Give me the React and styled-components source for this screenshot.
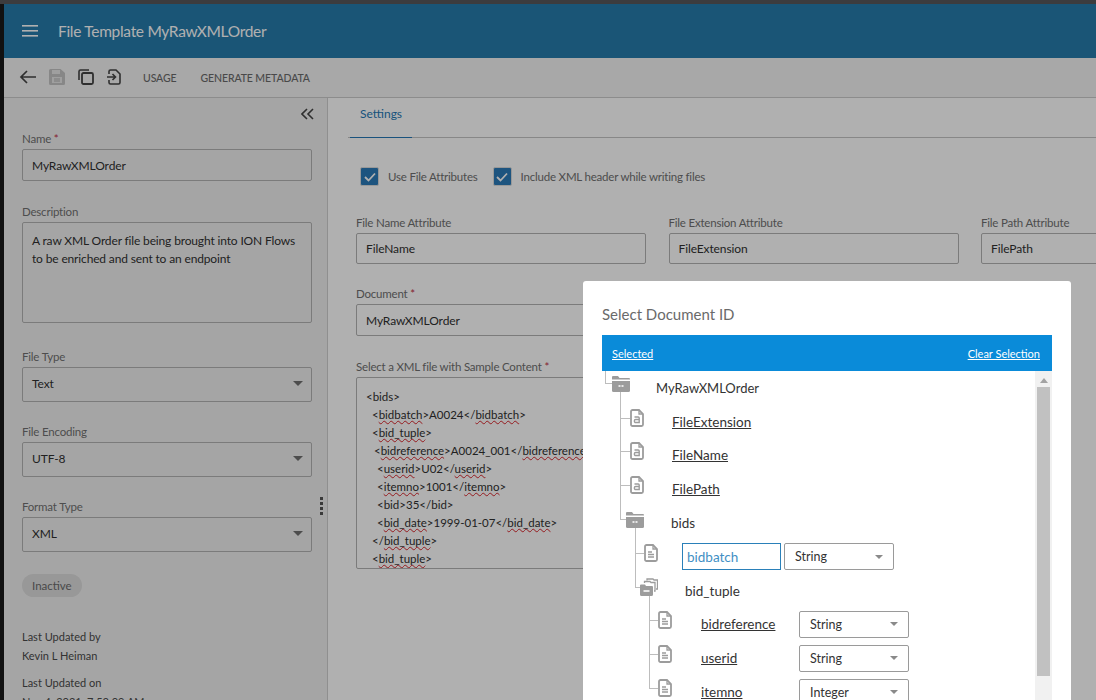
import React from "react";
import styled, { createGlobalStyle } from "styled-components";

const GlobalStyle = createGlobalStyle`
  html, body { margin: 0; padding: 0; height: 700px; overflow: hidden; background: #111; }
  body { font-family: "Lato", "Open Sans", sans-serif; }
  #root { height: 700px; }
  * { box-sizing: border-box; }
`;

const xmlLines = [
  [0, "<bids>"],
  [6, "<~bidbatch~>A0024</~bidbatch~>"],
  [6, "<~bid_tuple~>"],
  [8, "<~bidreference~>A0024_001</~bidreference~>"],
  [11, "<~userid~>U02</~userid~>"],
  [11, "<~itemno~>1001</~itemno~>"],
  [11, "<bid>35</bid>"],
  [11, "<~bid_date~>1999-01-07</~bid_date~>"],
  [6, "</~bid_tuple~>"],
  [6, "<~bid_tuple~>"],
];

const leftSelects = [
  { label: "File Type", value: "Text" },
  { label: "File Encoding", value: "UTF-8" },
  { label: "Format Type", value: "XML" },
];

const treeRows = [
  { level: 0, icon: "folder", name: "MyRawXMLOrder", gap: 26, root: true },
  { level: 1, icon: "attr", name: "FileExtension", gap: 28, link: true },
  { level: 1, icon: "attr", name: "FileName", gap: 28, link: true },
  { level: 1, icon: "attr", name: "FilePath", gap: 28, link: true },
  { level: 1, icon: "folder", name: "bids", gap: 27 },
  { level: 2, icon: "doc", name: "bidbatch", gap: 24, editing: true, type: "String" },
  { level: 2, icon: "multi", name: "bid_tuple", gap: 27 },
  { level: 3, icon: "doc", name: "bidreference", gap: 29, link: true, type: "String" },
  { level: 3, icon: "doc", name: "userid", gap: 29, link: true, type: "String" },
  { level: 3, icon: "doc", name: "itemno", gap: 29, link: true, type: "Integer" },
];

function Tick() {
  return (
    <svg width="12" height="10" viewBox="0 0 12 10" fill="none" stroke="#fff" strokeWidth="1.800">
      <path d="m1 5 3.500 3.500L11 1.500" />
    </svg>
  );
}

export default function App() {
  return (
    <>
      <GlobalStyle />
      <TopEdge />
      <Shell>
        <Header>
          <svg width="16" height="12" viewBox="0 0 16 12" fill="#fff">
            <rect y="0" width="16" height="1.6" />
            <rect y="5" width="16" height="1.6" />
            <rect y="10" width="16" height="1.6" />
          </svg>
          <Title>File Template MyRawXMLOrder</Title>
        </Header>

        <Toolbar>
          <ToolIcon $right={12} viewBox="0 0 18 16" width="18" height="16">
            <path d="M17 8H2M8 2 2 8l6 6" fill="none" stroke="#444" strokeWidth="1.7" />
          </ToolIcon>
          <ToolIcon viewBox="0 0 16 16" width="16" height="16">
            <path d="M1.5 0h10L16 4v10.500a1.500 1.500 0 0 1-1.500 1.500h-13A1.500 1.500 0 0 1 0 14.500v-13A1.500 1.500 0 0 1 1.500 0Z" fill="#c4c4c4" />
            <path d="M3 1h8v4H3zM3 8h10v6H3z" fill="#e6e6e6" />
            <path d="M5 10h6M5 12h6" stroke="#b0b0b0" strokeWidth="1" />
          </ToolIcon>
          <ToolIcon viewBox="0 0 16 16" width="16" height="16">
            <path d="M1 11V2.500A1.500 1.500 0 0 1 2.500 1H11" fill="none" stroke="#444" strokeWidth="1.600" />
            <rect x="4" y="4" width="11" height="11" rx="1.500" fill="none" stroke="#444" strokeWidth="1.800" />
          </ToolIcon>
          <ToolIcon viewBox="0 0 14 16" width="14" height="16">
            <path d="M2 5V2.500A1.500 1.500 0 0 1 3.500 1H9l4 4v8.500a1.500 1.500 0 0 1-1.500 1.500h-8A1.500 1.500 0 0 1 2 13.500V11" fill="none" stroke="#444" strokeWidth="1.600" />
            <path d="M0 8h8M5.500 5 8.500 8l-3 3" fill="none" stroke="#444" strokeWidth="1.600" />
          </ToolIcon>
          <ToolText $first>USAGE</ToolText>
          <ToolText>GENERATE METADATA</ToolText>
        </Toolbar>

        <Content>
          <LeftPanel>
            <CollapseRow>
              <svg width="13" height="12" viewBox="0 0 13 12" fill="none" stroke="#444" strokeWidth="1.600">
                <path d="M6 1 1 6l5 5M12 1 7 6l5 5" />
              </svg>
            </CollapseRow>
            <Label>Name <Req>*</Req></Label>
            <Input $h={32}>MyRawXMLOrder</Input>
            <Label $top={24}>Description</Label>
            <TextBox>A raw XML Order file being brought into ION Flows to be enriched and sent to an endpoint</TextBox>
            {leftSelects.map((s, i) => (
              <React.Fragment key={s.label}>
                <Label $top={i === 0 ? 27 : 23}>{s.label}</Label>
                <Select $h={35}>{s.value}<Caret /></Select>
              </React.Fragment>
            ))}
            <Pill>Inactive</Pill>
            <Meta $top={30}>Last Updated by</Meta>
            <Meta>Kevin L Heiman</Meta>
            <Meta $top={8}>Last Updated on</Meta>
            <Meta>Nov 4, 2021, 7:53:09 AM</Meta>
            <Grip><i /><i /><i /><i /></Grip>
          </LeftPanel>

          <RightPanel>
            <TabBar>
              <Tab>Settings</Tab>
            </TabBar>
            <Form>
              <CheckRow>
                <CheckItem>
                  <Check><Tick /></Check>
                  <span>Use File Attributes</span>
                </CheckItem>
                <CheckItem>
                  <Check><Tick /></Check>
                  <span>Include XML header while writing files</span>
                </CheckItem>
              </CheckRow>
              <FieldRow>
                <Field><Label>File Name Attribute</Label><Input $h={31}>FileName</Input></Field>
                <Field><Label>File Extension Attribute</Label><Input $h={31}>FileExtension</Input></Field>
                <Field><Label>File Path Attribute</Label><Input $h={31}>FilePath</Input></Field>
              </FieldRow>
              <Label $top={23}>Document <Req>*</Req></Label>
              <WideInput $h={32}>MyRawXMLOrder</WideInput>
              <Label $top={24}>Select a XML file with Sample Content <Req>*</Req></Label>
              <XmlBox>
                {xmlLines.map(([indent, text], i) => (
                  <XmlLine key={i} $indent={indent}>
                    {text.split("~").map((part, j) =>
                      j % 2 ? <Spell key={j}>{part}</Spell> : part
                    )}
                  </XmlLine>
                ))}
              </XmlBox>
            </Form>
          </RightPanel>
        </Content>

        <Backdrop />

        <Modal>
          <ModalTitle>Select Document ID</ModalTitle>
          <SelectedBar>
            <BarLink>Selected</BarLink>
            <BarLink>Clear Selection</BarLink>
          </SelectedBar>
          <TreeArea>
            <Tree>
              {treeRows.map((row) => (
                <TreeRow key={row.name} $level={row.level}>
                  <IconSlot
                    $gap={row.gap}
                    $root={row.root}
                    $level={row.level}
                    $doc={row.icon === "attr" || row.icon === "doc"}
                  >
                    <TreeIcon kind={row.icon} />
                  </IconSlot>
                  {row.editing ? (
                    <NameInput>{row.name}</NameInput>
                  ) : (
                    <NodeName $link={row.link} $fixed={!!row.type} $root={row.root}>
                      <span>{row.name}</span>
                    </NodeName>
                  )}
                  {row.type && <TypeSelect>{row.type}<SmallCaret /></TypeSelect>}
                </TreeRow>
              ))}
            </Tree>
            <Scrollbar>
              <ScrollUp />
              <ScrollThumb />
            </Scrollbar>
          </TreeArea>
        </Modal>
      </Shell>
    </>
  );
}

function TreeIcon({ kind }) {
  if (kind === "folder") {
    return (
      <svg width="18" height="17" viewBox="0 0 18 17">
        <path d="M0 2a1 1 0 0 1 1-1h5l1.500 2H17a1 1 0 0 1 1 1v.500H0Z" fill="#9c9c9c" />
        <path d="M0 6h18v9.500a1.500 1.500 0 0 1-1.500 1.500h-15A1.500 1.500 0 0 1 0 15.500Z" fill="#9c9c9c" />
        <path d="M6.500 11h2M9.500 11h2" stroke="#fff" strokeWidth="1.500" />
      </svg>
    );
  }
  if (kind === "multi") {
    return (
      <svg width="18" height="18" viewBox="0 0 18 18">
        <path d="M7 2.500V1h6l1 1h3.500v9H16" fill="none" stroke="#9c9c9c" strokeWidth="1.300" />
        <path d="M4.500 5V3.500H10l1 1h4V13h-1" fill="none" stroke="#9c9c9c" strokeWidth="1.300" />
        <path d="M0 7.500a1 1 0 0 1 1-1h4l1 1.500h6a1 1 0 0 1 1 1V16.500A1.500 1.500 0 0 1 11.500 18h-10A1.500 1.500 0 0 1 0 16.500Z" fill="#9c9c9c" />
        <path d="M3.500 13h6" stroke="#fff" strokeWidth="1.500" />
      </svg>
    );
  }
  return (
    <svg width="14" height="18" viewBox="0 0 14 18" fill="none" stroke="#9c9c9c">
      <path d="M2.500 1H9l4 4v10.500a1.500 1.500 0 0 1-1.500 1.500h-9A1.500 1.500 0 0 1 1 15.500v-13A1.500 1.500 0 0 1 2.500 1Z" strokeWidth="1.800" />
      <path d="M9 1v4h4" strokeWidth="1.300" />
      {kind === "attr" ? (
        <path d="M4.500 8h3.700a1 1 0 0 1 1 1v4.500H5.600a1.200 1.200 0 0 1-1.200-1.200v-.6a1.200 1.200 0 0 1 1.200-1.200h3.600" strokeWidth="1.400" />
      ) : (
        <path d="M4 8h4M4 10.500h6M4 13h6" strokeWidth="1.400" />
      )}
    </svg>
  );
}

const TopEdge = styled.div`
  height: 4px;
  background: #3c3c3e;
`;

const Shell = styled.div`
  position: relative;
  height: 696px;
  margin-left: 4px;
  display: flex;
  flex-direction: column;
  overflow: hidden;
  background: #fff;
`;

const Header = styled.header`
  flex: none;
  height: 54px;
  padding-left: 18px;
  display: flex;
  align-items: center;
  gap: 20px;
  background: #267bac;
`;

const Title = styled.div`
  color: #fff;
  font-size: 15.500px;
  letter-spacing: -0.3px;
`;

const Toolbar = styled.div`
  flex: none;
  height: 40px;
  padding-left: 15px;
  display: flex;
  align-items: center;
  background: #f3f3f3;
  border-bottom: 1px solid #cbcbcb;
`;

const ToolIcon = styled.svg`
  flex: none;
  margin-right: ${(p) => p.$right || 13}px;
  margin-bottom: 2px;
`;

const ToolText = styled.div`
  margin-left: ${(p) => (p.$first ? "9px" : "24px")};
  color: #6b6b6b;
  font-size: 10.500px;
  font-weight: 500;
  letter-spacing: -0.1px;
`;

const Content = styled.div`
  flex: 1;
  min-height: 0;
  display: flex;
`;

const LeftPanel = styled.aside`
  position: relative;
  flex: none;
  width: 324px;
  padding: 0 15px 0 18px;
  background: #f0f0f0;
  border-right: 1px solid #cfcfcf;
  display: flex;
  flex-direction: column;
  overflow: hidden;
  & > * {
    flex: none;
  }
`;

const CollapseRow = styled.div`
  height: 34px;
  padding: 10px 0 0;
  margin-right: -2px;
  display: flex;
  justify-content: flex-end;
`;

const Label = styled.div`
  margin-top: ${(p) => p.$top || 0}px;
  height: 17px;
  color: #707070;
  font-size: 11.500px;
  letter-spacing: -0.2px;
  line-height: 14px;
`;

const Req = styled.span`
  color: #c2314a;
`;

const Input = styled.div`
  height: ${(p) => p.$h}px;
  padding: 0 9px;
  display: flex;
  align-items: center;
  color: #303030;
  font-size: 12px;
  letter-spacing: -0.1px;
  border: 1px solid #b3b3b3;
  border-radius: 2px;
`;

const TextBox = styled.div`
  height: 101px;
  padding: 9px 9px;
  color: #303030;
  font-size: 12px;
  letter-spacing: -0.15px;
  line-height: 18px;
  border: 1px solid #b3b3b3;
  border-radius: 2px;
`;

const Select = styled(Input)`
  padding-bottom: 3px;
  justify-content: space-between;
`;

const Caret = styled.i`
  width: 0;
  height: 0;
  margin-right: -1px;
  border-left: 5px solid transparent;
  border-right: 5px solid transparent;
  border-top: 5px solid #707070;
`;

const SmallCaret = styled.i`
  width: 0;
  height: 0;
  border-left: 4px solid transparent;
  border-right: 4px solid transparent;
  border-top: 4px solid #8a8a8a;
`;

const Pill = styled.div`
  align-self: flex-start;
  margin-top: 22px;
  height: 23px;
  padding: 0 10px;
  display: flex;
  align-items: center;
  color: #6b6b6b;
  font-size: 11.500px;
  background: #dcdcdc;
  border-radius: 12px;
`;

const Meta = styled.div`
  margin-top: ${(p) => p.$top || 0}px;
  height: 19px;
  color: #4a4a4a;
  font-size: 11px;
  line-height: 19px;
`;

const Grip = styled.div`
  position: absolute;
  top: 399px;
  right: 4px;
  display: flex;
  flex-direction: column;
  gap: 2px;
  i {
    width: 3px;
    height: 3px;
    background: #555;
  }
`;

const RightPanel = styled.main`
  flex: 1;
  min-width: 0;
  padding-left: 20px;
  overflow: hidden;
`;

const TabBar = styled.div`
  height: 40px;
  display: flex;
  border-bottom: 1px solid #c4c4c4;
`;

const Tab = styled.div`
  margin-left: 2px;
  width: 62px;
  height: 40px;
  padding: 0 0 8px 10px;
  display: flex;
  align-items: center;
  color: #2578b5;
  font-size: 12px;
  border-bottom: 1px solid #2578b5;
`;

const Form = styled.div`
  padding-left: 8px;
`;

const CheckRow = styled.div`
  height: 78px;
  padding: 29px 0 0 4px;
  display: flex;
  gap: 15px;
`;

const CheckItem = styled.label`
  height: 19px;
  display: flex;
  align-items: center;
  gap: 9px;
  color: #707070;
  font-size: 11.500px;
  letter-spacing: -0.2px;
`;

const Check = styled.span`
  width: 19px;
  height: 19px;
  display: flex;
  align-items: center;
  justify-content: center;
  background: #2b7ab9;
  border: 1px solid #dcdcdc;
  border-radius: 2px;
`;

const FieldRow = styled.div`
  display: flex;
  gap: 22.500px;
`;

const Field = styled.div`
  flex: none;
  width: 290px;
`;

const WideInput = styled(Input)`
  width: 620px;
`;

const XmlBox = styled.div`
  width: 620px;
  height: 192px;
  padding: 10px 9px;
  border: 1px solid #b3b3b3;
  border-radius: 2px;
  overflow: hidden;
`;

const XmlLine = styled.div`
  height: 18px;
  padding-left: ${(p) => p.$indent}px;
  color: #303030;
  font-size: 11.500px;
  line-height: 18px;
  white-space: nowrap;
`;

const Spell = styled.span`
  text-decoration: underline wavy #d9272e 1px;
  text-decoration-skip-ink: none;
`;

const Backdrop = styled.div`
  position: absolute;
  inset: 0;
  background: rgba(0, 0, 0, 0.31);
`;

const Modal = styled.div`
  position: absolute;
  left: 579px;
  top: 277px;
  width: 488px;
  height: 440px;
  padding: 0 19px;
  background: #fff;
  border-radius: 3px;
`;

const ModalTitle = styled.div`
  height: 54px;
  padding-top: 24px;
  color: #6a6a6a;
  font-size: 15px;
  line-height: 18px;
`;

const SelectedBar = styled.div`
  height: 36px;
  padding: 0 12px 0 10px;
  display: flex;
  align-items: center;
  justify-content: space-between;
  background: #0a8bd9;
`;

const BarLink = styled.span`
  color: #fff;
  font-size: 11px;
  text-decoration: underline;
`;

const TreeArea = styled.div`
  position: relative;
  height: 350px;
`;

const Tree = styled.div`
  padding-left: 10px;
`;

const TreeRow = styled.div`
  height: 33.800px;
  padding-left: ${(p) => p.$level * 14}px;
  display: flex;
  align-items: center;
`;

const IconSlot = styled.div`
  position: relative;
  flex: none;
  width: 18px;
  margin-right: ${(p) => p.$gap}px;
  margin-bottom: 8px;
  display: flex;
  justify-content: flex-end;
  svg {
    position: relative;
    z-index: 1;
    display: block;
    background: #fff;
  }
  &::before {
    content: "";
    position: absolute;
    left: -${(p) => 7 - Math.min(p.$level, 2)}px;
    bottom: 8px;
    width: ${(p) => 7 - Math.min(p.$level, 2) + (p.$doc ? 4 : 0)}px;
    height: ${(p) => (p.$root ? "12px" : "34px")};
    border-left: 1px solid #bdbdbd;
    border-bottom: 1px solid #bdbdbd;
  }
`;

const NodeName = styled.div`
  flex: none;
  width: ${(p) => (p.$fixed ? "98px" : "auto")};
  color: #333;
  font-size: ${(p) => (p.$root ? "13px" : "13.500px")};
  span {
    text-decoration: ${(p) => (p.$link ? "underline" : "none")};
  }
`;

const NameInput = styled.div`
  flex: none;
  width: 99px;
  height: 27px;
  margin-right: 3px;
  padding: 0 4px;
  display: flex;
  align-items: center;
  color: #3f8fc4;
  font-size: 13.500px;
  border: 1px solid #2a80b9;
`;

const TypeSelect = styled.div`
  flex: none;
  width: 110px;
  height: 27px;
  padding: 0 10px;
  display: flex;
  align-items: center;
  justify-content: space-between;
  color: #333;
  font-size: 12.500px;
  border: 1px solid #9a9a9a;
  border-radius: 2px;
`;

const Scrollbar = styled.div`
  position: absolute;
  top: 0;
  right: 0;
  bottom: 0;
  width: 17px;
  padding: 0 2px;
  background: #f1f1f1;
`;

const ScrollUp = styled.div`
  width: 0;
  height: 0;
  margin: 7px auto 4px;
  border-left: 4px solid transparent;
  border-right: 4px solid transparent;
  border-bottom: 5px solid #a3a3a3;
`;

const ScrollThumb = styled.div`
  height: 289px;
  background: #c1c1c1;
`;
